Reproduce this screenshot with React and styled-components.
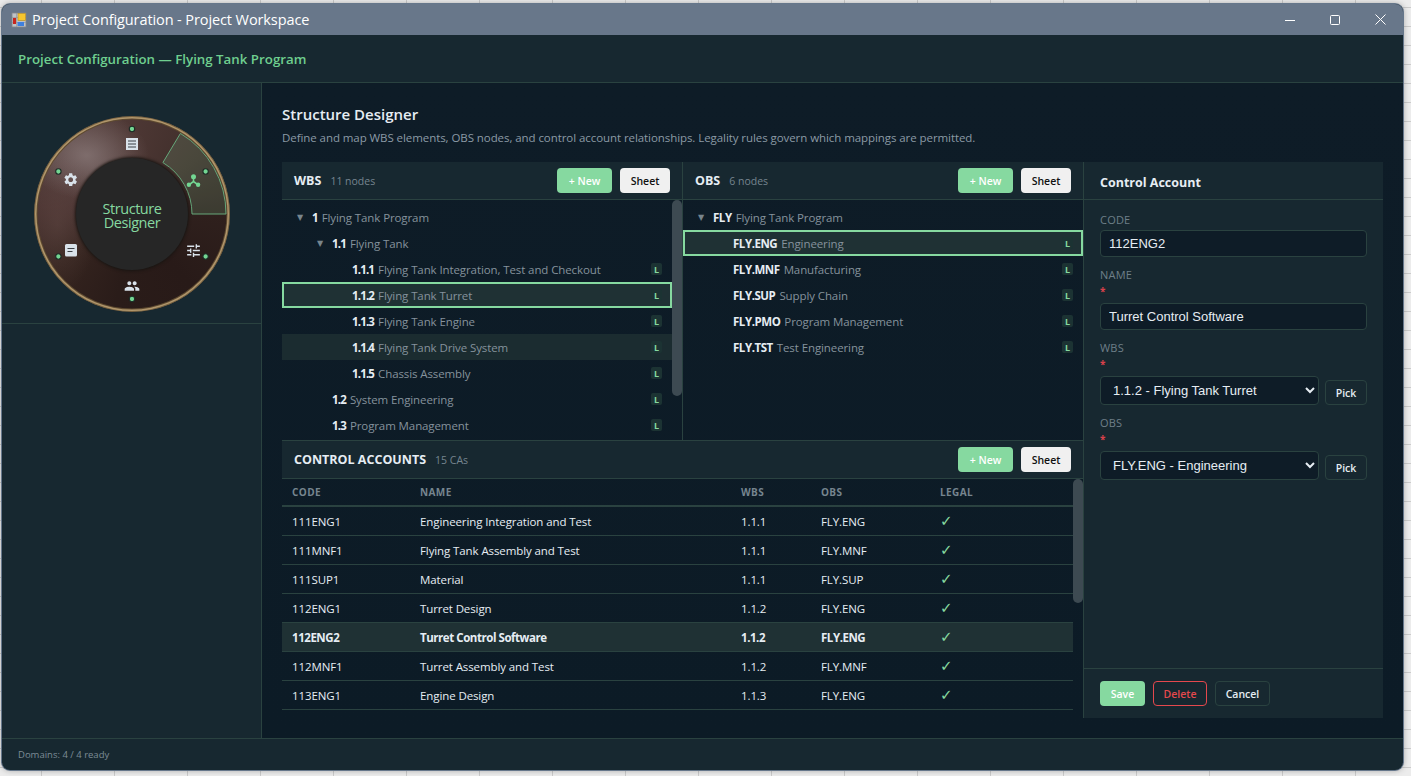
import React from 'react';
import styled, { createGlobalStyle } from 'styled-components';
import { MdSettings, MdPeople, MdTune } from 'react-icons/md';

const UI = '"Open Sans", "Noto Sans", sans-serif';
const LINE = '#2a4240';
const PANEL = '#172830';
const BODY = '#0e1c27';
const GREEN = '#86d9a0';

const Global = createGlobalStyle`
  html, body { margin: 0; height: 100%; overflow: hidden; }
  body {
    font-family: ${UI};
    background-color: #ececec;
    background-image:
      linear-gradient(to bottom, #cbcbcb 1px, transparent 1px),
      linear-gradient(to right, #cbcbcb 1px, transparent 1px);
    background-size: 100% 19px, 73px 100%;
    background-position: 0 7px, 41px 0;
  }
  * { box-sizing: border-box; }
`;

const Win = styled.div`
  width: 1401px; height: 766px; margin: 4px 0 0 2px;
  border-radius: 8px; overflow: hidden; display: flex; flex-direction: column;
  background: ${PANEL}; box-shadow: 0 0 0 1px #66778b, 0 0 6px rgba(0,0,0,.35);
`;
const TitleBar = styled.div`
  height: 31px; flex: none; background: #68778a; color: #fff; display: flex; align-items: center;
  padding-left: 9px; font-size: 14.5px; letter-spacing: -0.1px;
`;
const AppIcon = styled.svg` flex: none; margin: 0 5px 0 0; `;
const TitleText = styled.span` flex: 1; `;
const Caption = styled.div`
  width: ${p => p.$w || 45}px; height: 31px; display: flex; align-items: center; justify-content: center;
`;
const Header = styled.div`
  height: 48px; flex: none; border-bottom: 1px solid ${LINE}; display: flex; align-items: center;
  padding-left: 16px; font-size: 13.3px; font-weight: 600; color: #6fcf8f;
`;
const Middle = styled.div` flex: 1; display: flex; min-height: 0; `;
const Side = styled.aside` width: 260px; flex: none; border-right: 1px solid ${LINE}; `;
const WheelBox = styled.div`
  height: 241px; border-bottom: 1px solid ${LINE}; padding: 33px 0 0 32px;
`;
const Wheel = styled.div`
  position: relative; width: 196px; height: 196px; border-radius: 50%;
  background:
    radial-gradient(ellipse 62px 44px at 27% 20%, rgba(150,135,135,.6), transparent),
    radial-gradient(ellipse 40px 70px at 12% 55%, rgba(110,85,80,.35), transparent),
    conic-gradient(from 0deg, #4d3734 0deg, #3f2e2a 50deg, #2f201d 90deg, #281a18 140deg, #2a1c19 190deg, #35241f 235deg, #4a3331 275deg, #5a4543 320deg, #4d3734 360deg);
  box-shadow: inset 0 0 0 1px #77603e, inset 0 0 0 2.5px #b0966c, inset 0 0 0 3.5px #5e4a30;
`;
const WheelSvg = styled.svg` position: absolute; left: 0; top: 0; `;
const Hub = styled.div`
  position: absolute; left: 42px; top: 42px; width: 112px; height: 112px; border-radius: 50%;
  background: #262626; box-shadow: 0 0 3px 1px #191512; padding-top: 4px;
  display: flex; align-items: center; justify-content: center; text-align: center;
  color: ${GREEN}; font-size: 14.5px; font-weight: 500; line-height: 14px; letter-spacing: -0.45px;
`;

const Main = styled.main`
  flex: 1; min-width: 0; padding: 20px; background: linear-gradient(180deg, #0e1c27, #0c1b26);
  display: flex; flex-direction: column;
`;
const H1 = styled.div` font-size: 15px; font-weight: 600; color: #e6edf3; line-height: 24px; margin-top: -1px; `;
const Desc = styled.div` font-size: 11.5px; color: #8b9aa5; line-height: 16px; margin: 4px 0 16px; letter-spacing: -0.07px; `;
const Designer = styled.div` flex: 1; min-height: 0; display: flex; `;
const LeftCol = styled.div` width: 802px; flex: none; display: flex; flex-direction: column; border-right: 1px solid ${LINE}; `;
const TopRow = styled.div` height: 279px; flex: none; display: flex; border-bottom: 1px solid ${LINE}; `;
const TreePanel = styled.section`
  position: relative; flex: 1; min-width: 0; display: flex; flex-direction: column;
  &:first-child { flex: none; width: 401px; border-right: 1px solid ${LINE}; }
`;
const PanelHead = styled.div`
  height: 38px; flex: none; background: ${PANEL}; border-bottom: 1px solid ${LINE};
  display: flex; align-items: center; padding: 0 12px; gap: 8px;
`;
const PanelTitle = styled.span` font-size: 12.5px; font-weight: 700; color: #e6edf3; `;
const Count = styled.span` font-size: 10.5px; color: #76858f; margin-left: 1px; flex: 1; `;
const SolidBtn = styled.button`
  height: 25px; border: none; border-radius: 4px; padding: 0; font-family: ${UI}; font-size: 10.5px; font-weight: 600;
  width: ${p => p.$w}px; background: ${p => p.$light ? '#f0f0f0' : GREEN}; color: ${p => p.$light ? '#111' : '#fff'};
`;
const TreeBody = styled.div` flex: 1; min-height: 0; padding-top: 4px; overflow: hidden; `;
const Row = styled.div`
  height: 26px; display: flex; align-items: center; padding: 0 10px 0 ${p => 15 + p.$d * 20}px; font-size: 11.5px;
  margin-right: ${p => p.$sb ? '10px' : '0'};
  background: ${p => p.$sel ? '#1f3134' : p.$hover ? '#1b2c30' : 'transparent'};
  outline: ${p => p.$sel ? `2px solid ${GREEN}` : 'none'}; outline-offset: -2px;
  letter-spacing: -0.1px;
`;
const Arrow = styled.span`
  width: 15px; flex: none; color: #78858d; font-size: 8px; font-family: "DejaVu Sans", sans-serif;
`;
const NodeCode = styled.span`
  font-weight: 700; color: #e6edf3; margin-right: 4px; font-size: 11.5px;
  letter-spacing: ${p => p.$numeric ? '-0.85px' : '-0.45px'};
`;
const NodeName = styled.span` color: #85929c; flex: 1; `;
const Badge = styled.span`
  width: 11px; height: 12px; border-radius: 2px; background: #1c3333; color: ${GREEN};
  font-size: 9px; font-weight: 700; display: flex; align-items: center; justify-content: center;
`;
const Scroll = styled.div`
  position: absolute; right: ${p => p.$r}px; top: ${p => p.$t}px; width: 10px; height: ${p => p.$h}px; border-radius: 5px; background: #3d4a52;
`;
const CaPanel = styled.section` position: relative; flex: 1; min-height: 0; display: flex; flex-direction: column; `;
const TableWrap = styled.div` flex: 1; min-height: 0; overflow: hidden; margin-right: 10px; `;
const Grid = styled.div`
  display: grid; grid-template-columns: 128px 321px 80px 119px 1fr; align-items: center; padding-left: 10px;
  height: ${p => p.$head ? '28px' : '29px'};
  border-bottom: ${p => p.$head ? `2px solid ${LINE}` : `1px solid ${LINE}`};
  background: ${p => p.$sel ? '#1f3134' : 'transparent'};
  font-size: ${p => p.$head ? '10px' : '11.5px'};
  font-weight: ${p => p.$head ? 700 : p.$sel ? 700 : 400};
  color: ${p => p.$head ? '#76858f' : '#e6edf3'};
  letter-spacing: ${p => p.$head ? '0.4px' : p.$sel ? '-0.45px' : '-0.1px'};
`;
const Check = styled.span` color: ${GREEN}; font-size: 15px; line-height: 16px; font-family: "DejaVu Sans", sans-serif; font-weight: 400; `;

const Form = styled.aside` width: 299px; flex: none; background: ${PANEL}; display: flex; flex-direction: column; `;
const FormHead = styled.div`
  height: 38px; flex: none; border-bottom: 1px solid ${LINE}; display: flex; align-items: center; padding: 4px 16px 0;
  font-size: 12.5px; font-weight: 700; color: #e6edf3;
`;
const Fields = styled.div` flex: 1; padding: 12px 16px 0; display: flex; flex-direction: column; gap: 10px; `;
const Field = styled.div` display: flex; flex-direction: column; `;
const Label = styled.div` font-size: 11px; line-height: 16px; color: #6e7f88; letter-spacing: 0.2px; `;
const Req = styled.div` font-size: 10px; line-height: 16px; color: #d9414b; font-weight: 700; `;
const Input = styled.input`
  height: 27px; margin-top: ${p => p.$req ? '4px' : '2px'}; width: 100%; background: ${BODY}; border: 1px solid ${LINE}; border-radius: 4px;
  padding: 0 8px; color: #e6edf3; font-family: "Liberation Sans", Arial, sans-serif; font-size: 13px; outline: none;
`;
const SelectRow = styled.div` display: flex; align-items: flex-end; gap: 6px; margin-top: 4px; `;
const Select = styled.select`
  width: 219px; height: 29px; background: ${BODY}; border: 1px solid ${LINE}; border-radius: 4px;
  padding: 0 8px; color: #e6edf3; font-family: "Liberation Sans", Arial, sans-serif; font-size: 13px; outline: none;
`;
const Ghost = styled.button`
  height: 25px; width: ${p => p.$w}px; padding: 0; background: transparent; border-radius: 4px;
  border: 1px solid ${p => p.$danger ? '#e5484d' : LINE}; color: ${p => p.$danger ? '#e5484d' : '#e6edf3'};
  font-family: ${UI}; font-size: 10.5px; font-weight: 600;
`;
const FormFoot = styled.div`
  height: 50px; flex: none; border-top: 1px solid ${LINE}; padding: 12px 16px 0; display: flex; align-items: flex-start; gap: 8px;
`;
const Status = styled.footer`
  height: 32px; flex: none; border-top: 1px solid ${LINE}; padding-left: 16px; display: flex; align-items: center;
  font-size: 9.5px; color: #7d8c96;
`;

const wbs = [
  [0, '1', 'Flying Tank Program', 1],
  [1, '1.1', 'Flying Tank', 1],
  [2, '1.1.1', 'Flying Tank Integration, Test and Checkout'],
  [2, '1.1.2', 'Flying Tank Turret', 0, 'sel'],
  [2, '1.1.3', 'Flying Tank Engine'],
  [2, '1.1.4', 'Flying Tank Drive System', 0, 'hover'],
  [2, '1.1.5', 'Chassis Assembly'],
  [1, '1.2', 'System Engineering'],
  [1, '1.3', 'Program Management'],
];
const obs = [
  [0, 'FLY', 'Flying Tank Program', 1],
  [1, 'FLY.ENG', 'Engineering', 0, 'sel'],
  [1, 'FLY.MNF', 'Manufacturing'],
  [1, 'FLY.SUP', 'Supply Chain'],
  [1, 'FLY.PMO', 'Program Management'],
  [1, 'FLY.TST', 'Test Engineering'],
];
const cas = [
  ['111ENG1', 'Engineering Integration and Test', '1.1.1', 'FLY.ENG'],
  ['111MNF1', 'Flying Tank Assembly and Test', '1.1.1', 'FLY.MNF'],
  ['111SUP1', 'Material', '1.1.1', 'FLY.SUP'],
  ['112ENG1', 'Turret Design', '1.1.2', 'FLY.ENG'],
  ['112ENG2', 'Turret Control Software', '1.1.2', 'FLY.ENG', true],
  ['112MNF1', 'Turret Assembly and Test', '1.1.2', 'FLY.MNF'],
  ['113ENG1', 'Engine Design', '1.1.3', 'FLY.ENG'],
];

const Tree = ({ rows, sb }) => (
  <TreeBody>
    {rows.map(([d, code, name, parent, st]) => (
      <Row key={code} $d={d} $sb={sb} $sel={st === 'sel'} $hover={st === 'hover'}>
        <Arrow>{parent ? '▼' : ''}</Arrow>
        <NodeCode $numeric={sb}>{code}</NodeCode>
        <NodeName>{name}</NodeName>
        {!parent && <Badge>L</Badge>}
      </Row>
    ))}
  </TreeBody>
);

const Head = ({ title, count }) => (
  <PanelHead>
    <PanelTitle>{title}</PanelTitle>
    <Count>{count}</Count>
    <SolidBtn $w={55}>+ New</SolidBtn>
    <SolidBtn $w={50} $light>Sheet</SolidBtn>
  </PanelHead>
);

const WheelArt = () => {
  const c = 98;
  const pt = (r, a) => [c + r * Math.sin(a * Math.PI / 180), c - r * Math.cos(a * Math.PI / 180)];
  const [a, b] = pt(94, 31), [e, f] = pt(94, 90), [g, h] = pt(60, 90), [i, j] = pt(60, 31);
  const dots = [0, 60, 120, 180, 240, 300].map(x => pt(85, x));
  return (
    <WheelSvg width="196" height="196" viewBox="0 0 196 196">
      <path d={`M${a} ${b}A94 94 0 0 1 ${e} ${f}L${g} ${h}A60 60 0 0 0 ${i} ${j}Z`} fill="#86d9a0" fillOpacity=".15" stroke="#66a87b" strokeWidth="1" />
      {dots.map(([x, y], n) => (
        <circle key={n} cx={x} cy={y} r="2.7" fill="#73d692" stroke="#1d2a25" strokeWidth="1.1" />
      ))}
      <g transform="translate(92 22)">
        <rect width="12" height="12" fill="#d9e2ea" />
        <path d="M2 3h8M2 6h8M2 9h8" stroke="#3b3f44" strokeWidth="1.2" />
      </g>
      <g transform="translate(153 58)" fill="#73d692" stroke="#73d692">
        <circle cx="6.5" cy="2.8" r="2.5" strokeWidth="0" />
        <circle cx="1.9" cy="10.8" r="2.2" strokeWidth="0" />
        <circle cx="11.1" cy="10.8" r="2.2" strokeWidth="0" />
        <path d="M6.5 3V7.5L1.9 10.8M6.5 7.5L11.1 10.8" fill="none" strokeWidth="1.6" />
      </g>
      <MdTune x="151" y="126" size={17} color="#d9e2ea" />
      <MdPeople x="90" y="162" size={16} color="#d9e2ea" />
      <g transform="translate(31 128)">
        <rect width="12" height="12.5" rx="1.5" fill="#d9e2ea" />
        <path d="M2.5 4.5h7M2.5 7.5h5" stroke="#3b3f44" strokeWidth="1.2" />
      </g>
      <MdSettings x="28.7" y="55.7" size={16} color="#d9e2ea" />
    </WheelSvg>
  );
};

export default function App() {
  return (
    <>
      <Global />
      <Win>
        <TitleBar>
          <AppIcon width="16" height="16" viewBox="0 0 16 16">
            <rect x="1" y="1" width="14" height="14" fill="#bfc2c6" stroke="#80858b" strokeWidth=".8" />
            <path d="M1 5.5h14M1 10.5h14M5.5 1v14" stroke="#8f9499" strokeWidth=".6" />
            <rect x="2" y="6" width="3" height="6" fill="#c8261e" />
            <rect x="7" y="1.5" width="7.5" height="7" fill="#f5c52e" stroke="#b58b1c" strokeWidth=".6" />
            <rect x="6.5" y="10" width="6.5" height="4" fill="#3f80de" />
          </AppIcon>
          <TitleText>Project Configuration - Project Workspace</TitleText>
          <Caption><svg width="10" height="10"><path d="M0 5.5h10" stroke="#fff" /></svg></Caption>
          <Caption><svg width="10" height="10"><rect x=".5" y=".5" width="9" height="9" rx="1" fill="none" stroke="#fff" /></svg></Caption>
          <Caption $w={46}><svg width="11" height="11"><path d="M.5.5l10 10M10.5.5l-10 10" stroke="#fff" /></svg></Caption>
        </TitleBar>
        <Header>Project Configuration — Flying Tank Program</Header>
        <Middle>
          <Side>
            <WheelBox>
              <Wheel>
                <WheelArt />
                <Hub>Structure<br />Designer</Hub>
              </Wheel>
            </WheelBox>
          </Side>
          <Main>
            <H1>Structure Designer</H1>
            <Desc>Define and map WBS elements, OBS nodes, and control account relationships. Legality rules govern which mappings are permitted.</Desc>
            <Designer>
              <LeftCol>
                <TopRow>
                  <TreePanel>
                    <Head title="WBS" count="11 nodes" />
                    <Tree rows={wbs} sb />
                    <Scroll $r={0} $t={38} $h={196} />
                  </TreePanel>
                  <TreePanel>
                    <Head title="OBS" count="6 nodes" />
                    <Tree rows={obs} />
                  </TreePanel>
                </TopRow>
                <CaPanel>
                  <Head title="CONTROL ACCOUNTS" count="15 CAs" />
                  <TableWrap>
                    <Grid $head><span>CODE</span><span>NAME</span><span>WBS</span><span>OBS</span><span>LEGAL</span></Grid>
                    {cas.map(([c, n, w, o, s]) => (
                      <Grid key={c} $sel={s}><span>{c}</span><span>{n}</span><span>{w}</span><span>{o}</span><Check>✓</Check></Grid>
                    ))}
                  </TableWrap>
                  <Scroll $r={0} $t={38} $h={124} />
                </CaPanel>
              </LeftCol>
              <Form>
                <FormHead>Control Account</FormHead>
                <Fields>
                  <Field><Label>CODE</Label><Input readOnly value="112ENG2" /></Field>
                  <Field><Label>NAME</Label><Req>*</Req><Input $req readOnly value="Turret Control Software" /></Field>
                  <Field>
                    <Label>WBS</Label><Req>*</Req>
                    <SelectRow>
                      <Select defaultValue="a"><option value="a">1.1.2 - Flying Tank Turret</option></Select>
                      <Ghost $w={42}>Pick</Ghost>
                    </SelectRow>
                  </Field>
                  <Field>
                    <Label>OBS</Label><Req>*</Req>
                    <SelectRow>
                      <Select defaultValue="a"><option value="a">FLY.ENG - Engineering</option></Select>
                      <Ghost $w={42}>Pick</Ghost>
                    </SelectRow>
                  </Field>
                </Fields>
                <FormFoot>
                  <SolidBtn $w={45}>Save</SolidBtn>
                  <Ghost $w={54} $danger>Delete</Ghost>
                  <Ghost $w={55}>Cancel</Ghost>
                </FormFoot>
              </Form>
            </Designer>
          </Main>
        </Middle>
        <Status>Domains: 4 / 4 ready</Status>
      </Win>
    </>
  );
}
